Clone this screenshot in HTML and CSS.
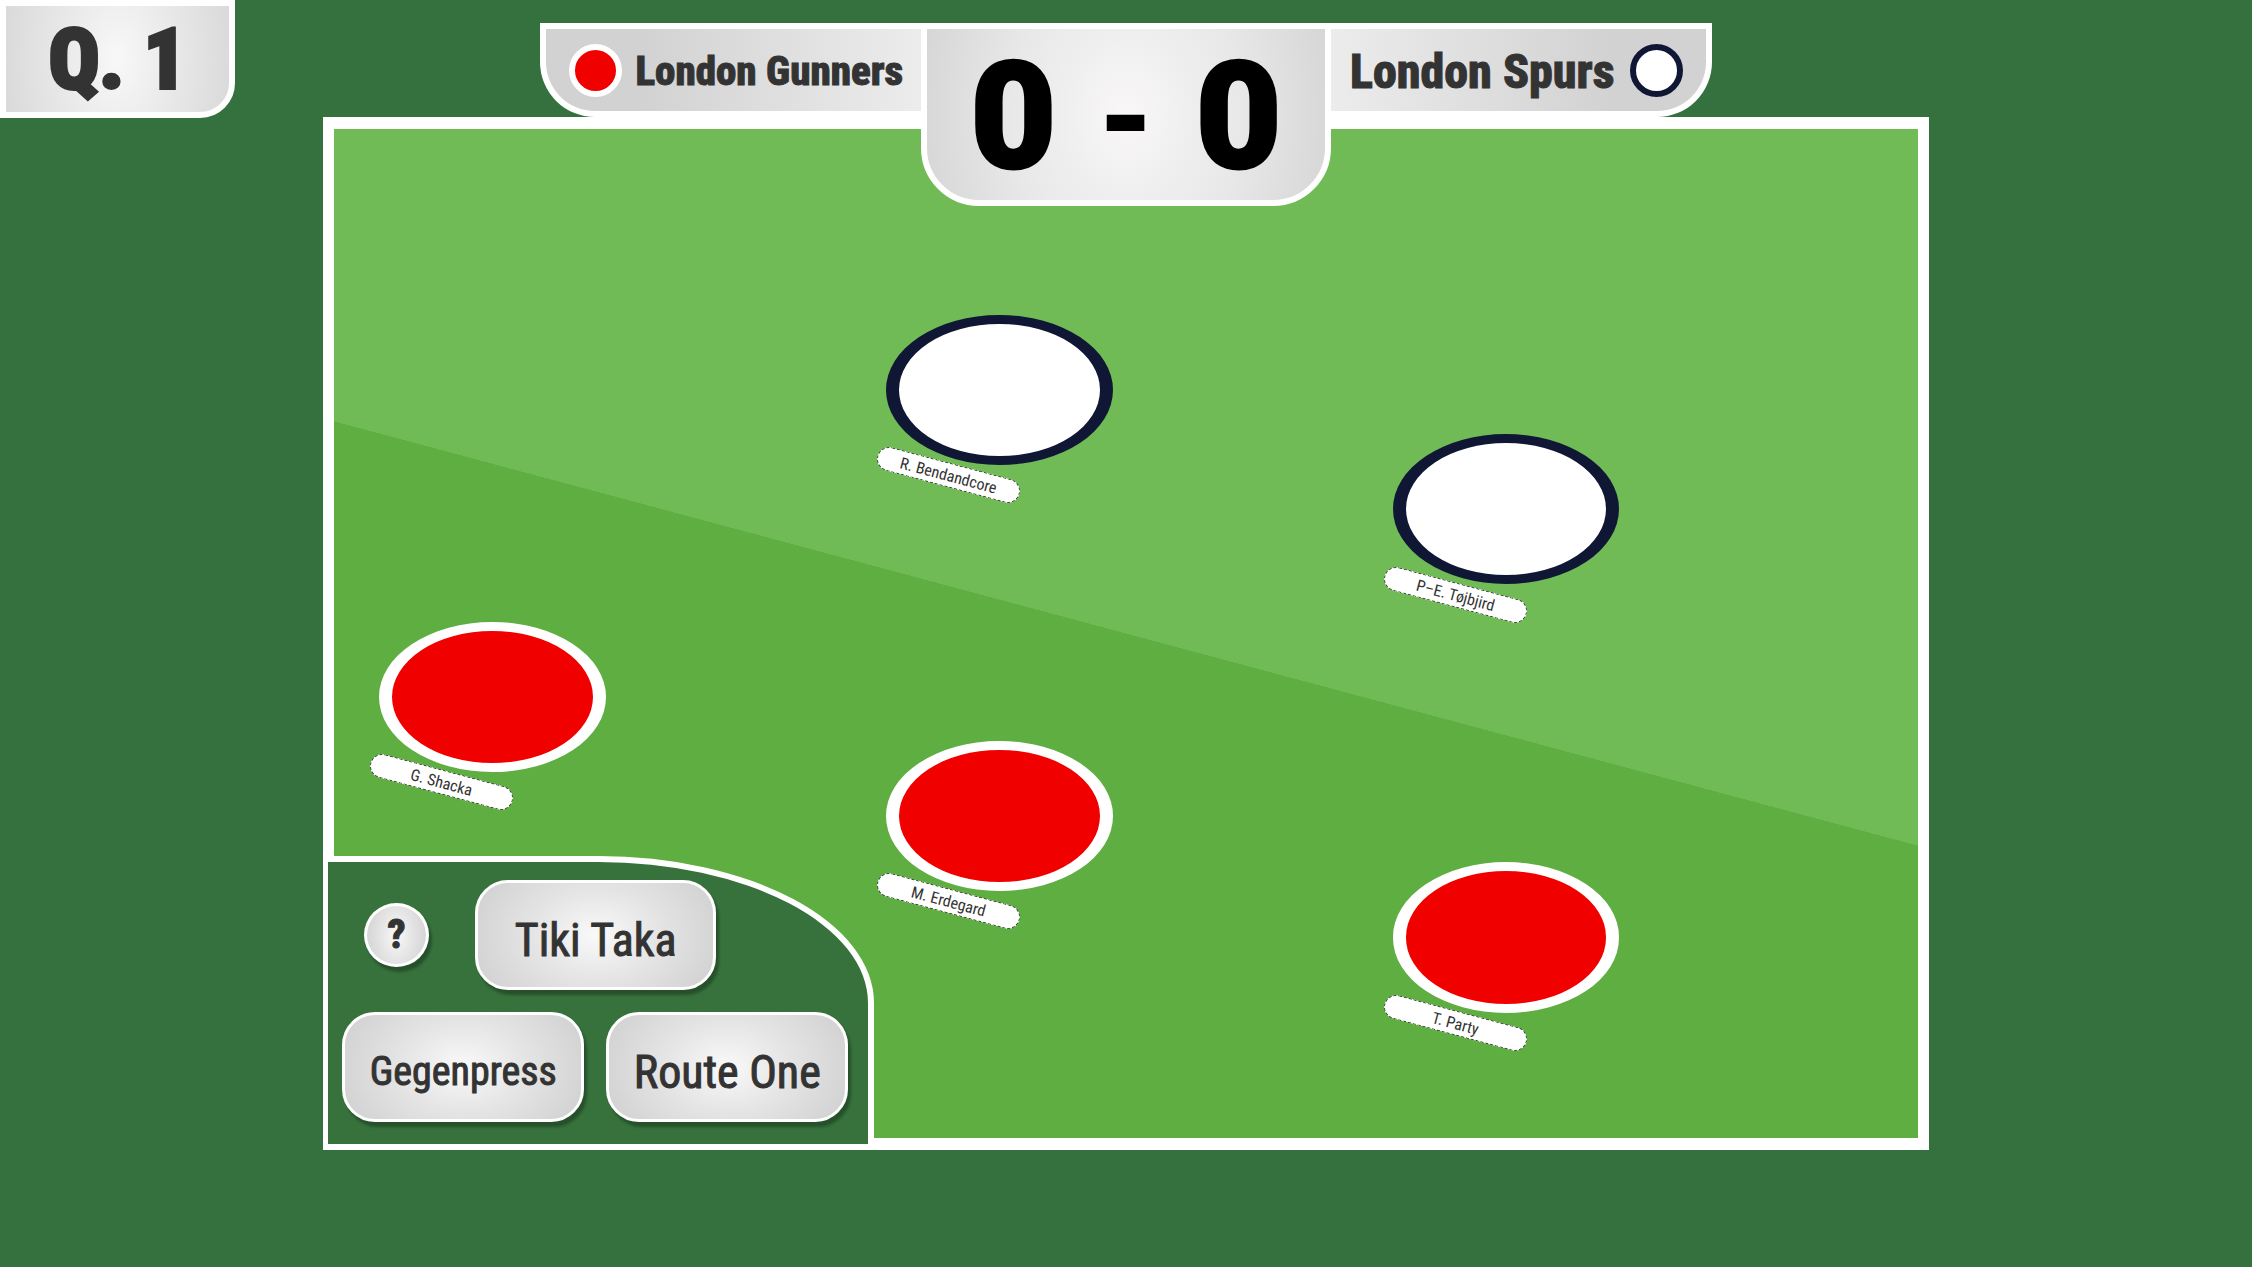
FILE: index.html
```html
<!DOCTYPE html>
<html lang="en">
<head>
<meta charset="utf-8">
<meta name="viewport" content="width=device-width, initial-scale=1">
<title>Match</title>
<link rel="stylesheet" href="styles.css">
</head>
<body>
<div class="quarter">Q. 1</div>
<header class="scoreboard">
  <div class="team team-home"><span class="kit kit-red"></span><span class="team-name">London Gunners</span></div>
  <div class="score"><span>0</span><span class="dash">-</span><span>0</span></div>
  <div class="team team-away"><span class="team-name team-name-large">London Spurs</span><span class="kit kit-white"></span></div>
</header>
<main class="pitch">
  <div class="player bendandcore"><div class="disc kit-white"></div><div class="label">R. Bendandcore</div></div>
  <div class="player tojbjird"><div class="disc kit-white"></div><div class="label">P–E. Tøjbjird</div></div>
  <div class="player shacka"><div class="disc kit-red"></div><div class="label">G. Shacka</div></div>
  <div class="player erdegard"><div class="disc kit-red"></div><div class="label">M. Erdegard</div></div>
  <div class="player party"><div class="disc kit-red"></div><div class="label">T. Party</div></div>
  <section class="tactics">
    <div class="tactics-top">
      <button class="btn help" type="button">?</button>
      <button class="btn tactic" type="button">Tiki Taka</button>
    </div>
    <button class="btn tactic tactic-long" type="button">Gegenpress</button>
    <button class="btn tactic" type="button">Route One</button>
  </section>
</main>
</body>
</html>
```
FILE: styles.css
```css
* { box-sizing: border-box; }

body {
  margin: 0;
  min-height: 100vh;
  padding-top: 23px;
  background: #35713e;
  color: #333;
  font-family: "Roboto Condensed", "Liberation Sans Narrow", Roboto, sans-serif;
}

.quarter {
  position: absolute;
  top: 0;
  left: 0;
  width: 235px;
  height: 118px;
  display: flex;
  align-items: center;
  justify-content: center;
  border: 6px solid #fff;
  border-bottom-right-radius: 35px;
  background: radial-gradient(ellipse 60% 200%, #f8f8f8, #e6e6e6 50%, #d5d5d5);
  font-size: 84px;
  font-weight: 800;
  -webkit-text-stroke: 4px #333;
}

/* Scoreboard hangs over the top edge of the pitch */
.scoreboard {
  position: relative;
  z-index: 1;
  display: flex;
  align-items: flex-start;
  width: 52%;
  margin: 0 auto -89px;
}

.team {
  flex: 1;
  display: flex;
  align-items: center;
  height: 94px;
  border: 6px solid #fff;
  white-space: nowrap;
}

.team-home {
  gap: 13px;
  padding-left: 23px;
  border-right: 0;
  border-bottom-left-radius: 55px;
  background: linear-gradient(90deg, #d2d2d2 25%, #ececec);
}

.team-away {
  justify-content: flex-end;
  gap: 15px;
  padding-right: 23px;
  border-left: 0;
  border-bottom-right-radius: 55px;
  background: linear-gradient(270deg, #d2d2d2 25%, #ececec);
}

.team-name {
  padding-top: 2px;
  font-size: 41px;
  font-weight: 800;
  -webkit-text-stroke: 1px #333;
}

.team-name-large { font-size: 48px; }

.kit {
  width: 53px;
  height: 53px;
  border: 6px solid;
  border-radius: 50%;
}

.kit-red { background: #f10000; border-color: #fff; }
.kit-white { background: #fff; border-color: #101735; }

.score {
  display: grid;
  grid-template-columns: 1fr 1fr 1fr;
  align-items: center;
  justify-items: center;
  width: 35%;
  height: 183px;
  padding: 6px 30px 0;
  border: 6px solid #fff;
  border-radius: 0 0 58px 58px;
  background: radial-gradient(ellipse 58% 180%, #f9f7f8, #e8e8e8 50%, #d2d2d2);
  color: #000;
  font-family: Roboto, sans-serif;
  font-size: 148px;
  font-weight: 900;
  line-height: 1;
  -webkit-text-stroke: 3px #000;
}

.dash {
  font-size: 128px;
  -webkit-text-stroke: 0;
}

.pitch {
  position: relative;
  display: flex;
  align-items: flex-end;
  width: 71.3%;
  height: 81.5vh;
  margin: 0 auto;
  border: 12px solid #fff;
  border-width: 12px 11px;
  background: linear-gradient(195deg, #70bb56 50%, #5fae41 50%);
}

.player {
  position: absolute;
  width: 14.3%;
  height: 14.9%;
}

.bendandcore { left: 34.85%; top: 18.4%; }
.tojbjird { left: 66.85%; top: 30.25%; }
.shacka { left: 2.85%; top: 48.85%; }
.erdegard { left: 34.85%; top: 60.65%; }
.party { left: 66.85%; top: 72.7%; }

.disc {
  width: 100%;
  height: 100%;
  border-style: solid;
  border-width: 9px 13px;
  border-radius: 50%;
}

.label {
  position: absolute;
  left: -5%;
  top: 99%;
  width: 65%;
  height: 24px;
  border: 1px dashed #444;
  border-radius: 12px;
  background: #fff;
  font-size: 16px;
  line-height: 23px;
  text-align: center;
  white-space: nowrap;
  transform: rotate(15deg);
}

.tactics {
  display: grid;
  grid-template-columns: 1fr 1fr;
  gap: 22px;
  width: 34.8%;
  margin: 0 0 -12px -11px;
  padding: 18px 20px 22px 14px;
  border: 6px solid #fff;
  border-left-width: 5px;
  border-top-right-radius: 50%;
  background: #37723d;
}

.tactics-top {
  grid-column: 1 / -1;
  display: flex;
  align-items: center;
  gap: 46px;
  padding-left: 22px;
}

.btn {
  padding: 0;
  border: 3px solid #fff;
  background: radial-gradient(ellipse 55% 90%, #f9f9f9, #e4e4e4 50%, #d2d2d2);
  box-shadow: 3px 5px 3px rgba(0, 0, 0, 0.3);
  color: #333;
  font-family: inherit;
  cursor: pointer;
}

.tactic {
  height: 110px;
  padding-top: 10px;
  border-radius: 33px;
  font-size: 46px;
  -webkit-text-stroke: 1px #333;
}

.tactic-long { font-size: 40px; }

.tactics-top .tactic { max-width: 241px; flex: 1; }

.help {
  width: 65px;
  height: 64px;
  border-radius: 50%;
  font-size: 40px;
  font-weight: 800;
  -webkit-text-stroke: 1px #333;
}
```
